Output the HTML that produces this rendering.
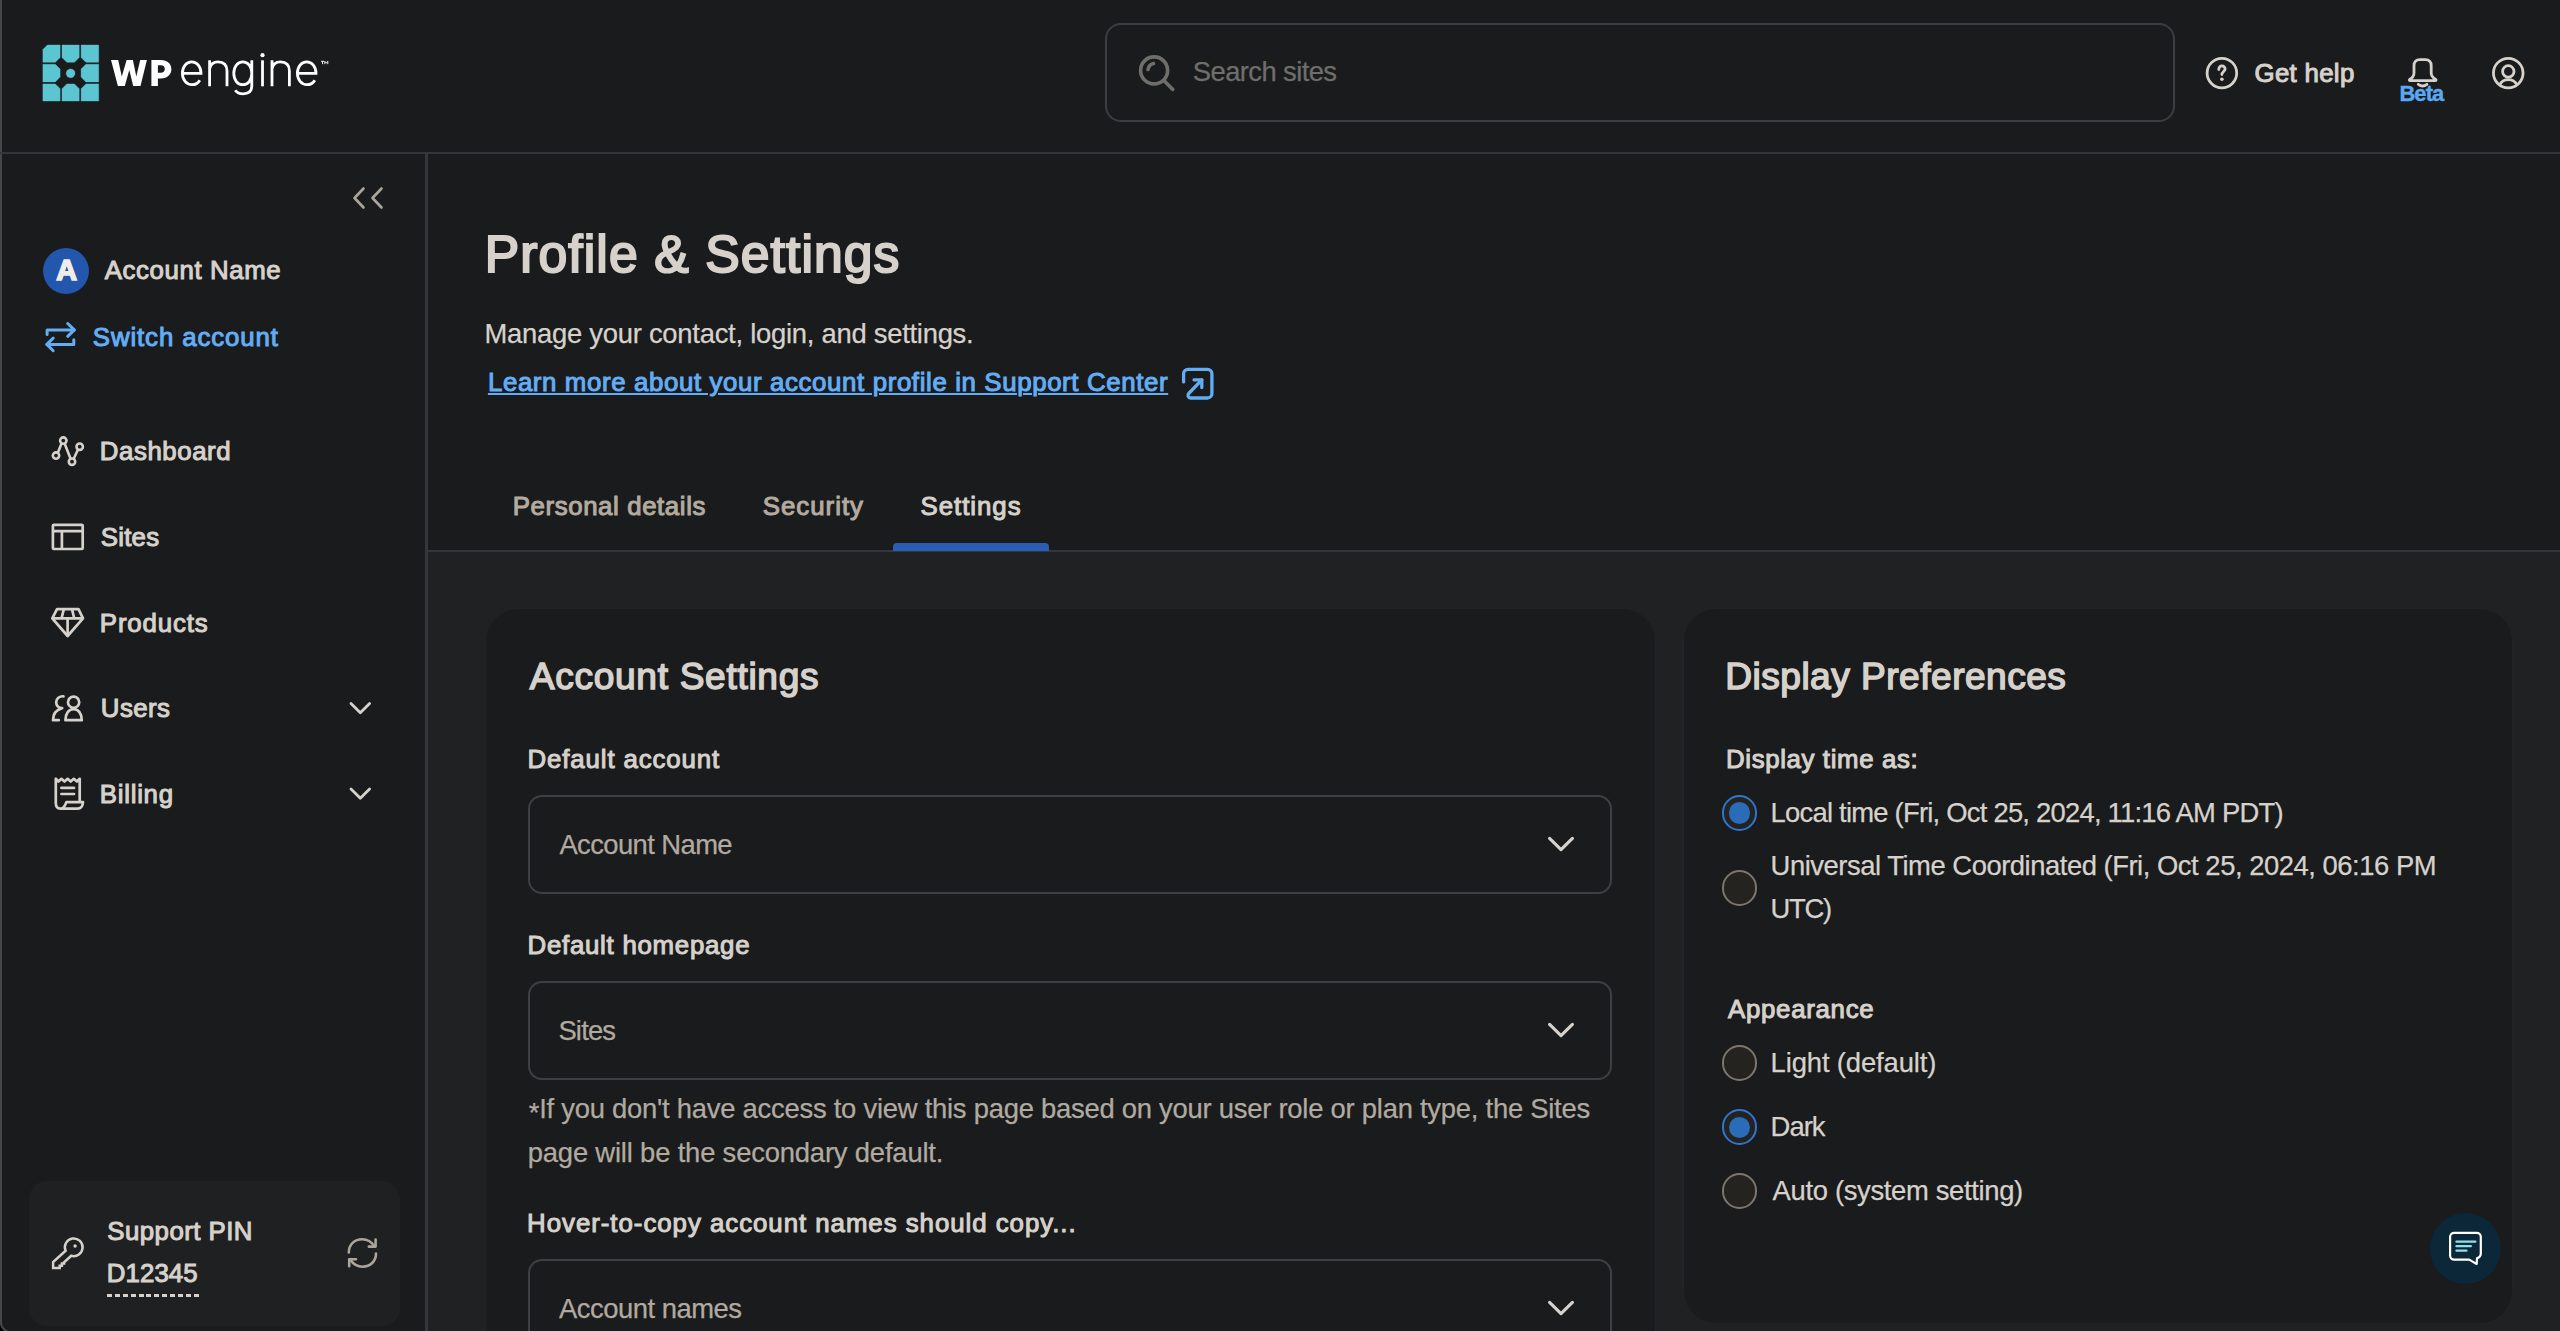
<!DOCTYPE html>
<html><head><meta charset="utf-8"><title>Profile &amp; Settings</title>
<style>
html,body{margin:0;padding:0;background:#1a1b1d}
body{width:2560px;height:1331px;overflow:hidden;position:relative;background:#1a1b1d;font-family:"Liberation Sans",sans-serif}
.a{position:absolute}
.t{position:absolute;white-space:pre;font-family:"Liberation Sans",sans-serif}
svg{position:absolute;overflow:visible}
#t_search{left:1192.82px;top:58.10px;font-size:27.40px;line-height:27.40px;font-weight:400;letter-spacing:-0.588px;color:#6f6e6b;-webkit-text-stroke:0.25px #6f6e6b}
#t_help{left:2254.52px;top:61.34px;font-size:25.82px;line-height:25.82px;font-weight:400;letter-spacing:0.306px;color:#d6d2cb;-webkit-text-stroke:1.03px #d6d2cb}
#t_beta{left:2399.40px;top:82.94px;font-size:21.80px;line-height:21.80px;font-weight:700;letter-spacing:-0.807px;color:#5aa9f2;-webkit-text-stroke:0.40px #5aa9f2}
#t_acct{left:104.72px;top:257.74px;font-size:25.82px;line-height:25.82px;font-weight:400;letter-spacing:0.603px;color:#d6d2cb;-webkit-text-stroke:1.03px #d6d2cb}
#t_switch{left:92.82px;top:325.34px;font-size:25.82px;line-height:25.82px;font-weight:400;letter-spacing:0.887px;color:#63adf4;-webkit-text-stroke:1.03px #63adf4}
#t_dash{left:99.82px;top:439.34px;font-size:25.82px;line-height:25.82px;font-weight:400;letter-spacing:0.568px;color:#d6d2cb;-webkit-text-stroke:1.03px #d6d2cb}
#t_sites{left:100.82px;top:525.34px;font-size:25.82px;line-height:25.82px;font-weight:400;letter-spacing:0.222px;color:#d6d2cb;-webkit-text-stroke:1.03px #d6d2cb}
#t_prod{left:99.82px;top:610.94px;font-size:25.82px;line-height:25.82px;font-weight:400;letter-spacing:0.859px;color:#d6d2cb;-webkit-text-stroke:1.03px #d6d2cb}
#t_users{left:100.82px;top:695.54px;font-size:25.82px;line-height:25.82px;font-weight:400;letter-spacing:0.442px;color:#d6d2cb;-webkit-text-stroke:1.03px #d6d2cb}
#t_bill{left:99.82px;top:782.14px;font-size:25.82px;line-height:25.82px;font-weight:400;letter-spacing:0.726px;color:#d6d2cb;-webkit-text-stroke:1.03px #d6d2cb}
#t_pin{left:107.32px;top:1219.44px;font-size:25.82px;line-height:25.82px;font-weight:400;letter-spacing:0.450px;color:#d6d2cb;-webkit-text-stroke:1.03px #d6d2cb}
#t_pinv{left:106.82px;top:1260.94px;font-size:25.82px;line-height:25.82px;font-weight:400;letter-spacing:0.081px;color:#d6d2cb;-webkit-text-stroke:1.03px #d6d2cb}
#t_title{left:484.73px;top:229.18px;font-size:51.65px;line-height:51.65px;font-weight:400;letter-spacing:1.092px;color:#d6d2cb;-webkit-text-stroke:2.07px #d6d2cb}
#t_sub{left:484.52px;top:319.60px;font-size:27.40px;line-height:27.40px;font-weight:400;letter-spacing:-0.257px;color:#d6d2cb;-webkit-text-stroke:0.25px #d6d2cb}
#t_link{left:487.92px;top:370.04px;font-size:25.82px;line-height:25.82px;font-weight:400;letter-spacing:0.629px;color:#63adf4;-webkit-text-stroke:1.03px #63adf4}
#t_tab1{left:512.72px;top:494.14px;font-size:25.82px;line-height:25.82px;font-weight:400;letter-spacing:0.601px;color:#b3ab9f;-webkit-text-stroke:1.03px #b3ab9f}
#t_tab2{left:762.72px;top:494.14px;font-size:25.82px;line-height:25.82px;font-weight:400;letter-spacing:1.004px;color:#b3ab9f;-webkit-text-stroke:1.03px #b3ab9f}
#t_tab3{left:920.52px;top:494.14px;font-size:25.82px;line-height:25.82px;font-weight:400;letter-spacing:0.972px;color:#d6d2cb;-webkit-text-stroke:1.03px #d6d2cb}
#t_as{left:529.84px;top:657.71px;font-size:37.09px;line-height:37.09px;font-weight:400;letter-spacing:0.694px;color:#d6d2cb;-webkit-text-stroke:1.48px #d6d2cb}
#t_da{left:527.52px;top:747.14px;font-size:25.82px;line-height:25.82px;font-weight:400;letter-spacing:0.877px;color:#d6d2cb;-webkit-text-stroke:1.03px #d6d2cb}
#t_s1{left:559.42px;top:831.10px;font-size:27.40px;line-height:27.40px;font-weight:400;letter-spacing:-0.587px;color:#b1aaa0;-webkit-text-stroke:0.25px #b1aaa0}
#t_dh{left:527.52px;top:932.54px;font-size:25.82px;line-height:25.82px;font-weight:400;letter-spacing:0.738px;color:#d6d2cb;-webkit-text-stroke:1.03px #d6d2cb}
#t_s2{left:558.42px;top:1016.70px;font-size:27.40px;line-height:27.40px;font-weight:400;letter-spacing:-0.811px;color:#b1aaa0;-webkit-text-stroke:0.25px #b1aaa0}
#t_n1{left:528.72px;top:1095.20px;font-size:27.40px;line-height:27.40px;font-weight:400;letter-spacing:-0.242px;color:#b1aaa0;-webkit-text-stroke:0.25px #b1aaa0}
#t_n2{left:527.72px;top:1138.50px;font-size:27.40px;line-height:27.40px;font-weight:400;letter-spacing:-0.180px;color:#b1aaa0;-webkit-text-stroke:0.25px #b1aaa0}
#t_hc{left:527.12px;top:1210.74px;font-size:25.82px;line-height:25.82px;font-weight:400;letter-spacing:0.968px;color:#d6d2cb;-webkit-text-stroke:1.03px #d6d2cb}
#t_s3{left:559.02px;top:1294.70px;font-size:27.40px;line-height:27.40px;font-weight:400;letter-spacing:-0.479px;color:#b1aaa0;-webkit-text-stroke:0.25px #b1aaa0}
#t_dp{left:1725.24px;top:657.81px;font-size:37.09px;line-height:37.09px;font-weight:400;letter-spacing:0.493px;color:#d6d2cb;-webkit-text-stroke:1.48px #d6d2cb}
#t_dt{left:1726.02px;top:746.74px;font-size:25.82px;line-height:25.82px;font-weight:400;letter-spacing:0.631px;color:#d6d2cb;-webkit-text-stroke:1.03px #d6d2cb}
#t_r1{left:1770.62px;top:798.80px;font-size:27.40px;line-height:27.40px;font-weight:400;letter-spacing:-0.768px;color:#d6d2cb;-webkit-text-stroke:0.25px #d6d2cb}
#t_r2{left:1770.62px;top:852.30px;font-size:27.40px;line-height:27.40px;font-weight:400;letter-spacing:-0.468px;color:#d6d2cb;-webkit-text-stroke:0.25px #d6d2cb}
#t_r2b{left:1770.62px;top:894.50px;font-size:27.40px;line-height:27.40px;font-weight:400;letter-spacing:-1.280px;color:#d6d2cb;-webkit-text-stroke:0.25px #d6d2cb}
#t_ap{left:1728.02px;top:997.14px;font-size:25.82px;line-height:25.82px;font-weight:400;letter-spacing:0.713px;color:#d6d2cb;-webkit-text-stroke:1.03px #d6d2cb}
#t_l{left:1770.62px;top:1048.60px;font-size:27.40px;line-height:27.40px;font-weight:400;letter-spacing:-0.129px;color:#d6d2cb;-webkit-text-stroke:0.25px #d6d2cb}
#t_d{left:1770.62px;top:1112.60px;font-size:27.40px;line-height:27.40px;font-weight:400;letter-spacing:-0.961px;color:#d6d2cb;-webkit-text-stroke:0.25px #d6d2cb}
#t_a{left:1772.62px;top:1177.00px;font-size:27.40px;line-height:27.40px;font-weight:400;letter-spacing:-0.334px;color:#d6d2cb;-webkit-text-stroke:0.25px #d6d2cb}
#t_avA{left:56.20px;top:255.54px;font-size:28.78px;line-height:28.78px;font-weight:700;letter-spacing:0.000px;color:#f0ede8;-webkit-text-stroke:1.60px #f0ede8}
#t_link{text-decoration:underline;text-decoration-thickness:2px;text-underline-offset:2px;text-decoration-skip-ink:auto}
</style></head>
<body>
<!-- frame / backgrounds -->
<div class="a" style="left:0;top:0;width:2px;height:1331px;background:#454748"></div>
<div class="a" style="left:0;top:152px;width:2560px;height:2px;background:#333639"></div>
<div class="a" style="left:425px;top:154px;width:3px;height:1177px;background:#34373a"></div>
<div class="a" style="left:428px;top:550px;width:2132px;height:2px;background:#34373a"></div>
<div class="a" style="left:428px;top:552px;width:2132px;height:779px;background:#202123"></div>

<svg style="left:0;top:1311px" width="24" height="20" viewBox="0 0 24 20">
  <path d="M0 11A11.25 11.25 0 0 0 11.25 22.25H0Z" fill="#000"/>
  <path d="M1 11A10.25 10.25 0 0 0 11.25 21.25" fill="none" stroke="#454748" stroke-width="2"/>
</svg>
<!-- header -->
<svg style="left:42px;top:45px" width="57" height="57" viewBox="0 0 57 57">
  <g fill="#5bc6d2" stroke="#5bc6d2" stroke-width="0.4" stroke-linejoin="round">
    <path d="M0.9 4.5L5.4 0H18.1V12.5L13.3 17.3H0.9Z"/>
    <path d="M20 0H37.2V12.5L32.4 17.3H24.8L20 12.5Z"/>
    <path d="M39.1 0H56.7V17.3H43.9L39.1 12.5Z"/>
    <path d="M0.9 19.3H13.3L18.1 24.1V32.1L13.3 36.9H0.9Z"/>
    <path d="M43.9 19.3H56.7V36.9H43.9L39.1 32.1V24.1Z"/>
    <path d="M0.9 38.9H13.3L18.1 43.7V56H0.9Z"/>
    <path d="M24.8 38.9H32.4L37.2 43.7V56H20V43.7Z"/>
    <path d="M43.9 38.9H56.7V56H39.1V43.7Z"/>
    <circle cx="28.6" cy="28.3" r="4.4"/>
  </g>
</svg>
<svg style="left:105px;top:52px" width="75" height="40" viewBox="0 0 75 40">
  <path fill="#fff" d="M6 8.1H13.2L16.8 24.6L21.6 8.1H27.9L31.3 24.6L35.2 8.1H41.9L35.5 34H28.2L24.3 18L19.8 34H12.9Z"/>
  <path fill="#fff" fill-rule="evenodd" d="M46.4 8.1H56C62 8.1 66.4 11.8 66.4 17.3C66.4 22.8 62 26.4 56 26.4H52.9V34H46.4ZM52.9 13.2H55.8C58.3 13.2 59.8 14.8 59.8 17C59.8 19.2 58.3 20.7 55.8 20.7H52.9Z"/>
</svg>
<svg style="left:180px;top:50px" width="160" height="50" viewBox="0 0 160 50">
  <g fill="none" stroke="#fff" stroke-width="2.8">
    <path id="eL" d="M2.4 23.3H21C21 16.5 17 11.9 11.7 11.9C6.4 11.9 2.4 16.8 2.4 23.3C2.4 29.8 6.4 34.7 11.9 34.7C15.5 34.7 18.2 33 19.8 30.2"/>
    <path d="M29.6 10.3V36.3M29.6 19C30.5 14.5 33.5 11.9 38 11.9C43.5 11.9 47 15 47 21V36.3"/>
    <path d="M71.8 10.3V36C71.8 41 68.5 43.8 63 43.8C59.5 43.8 56.8 42.5 55.2 40.2M71.8 23.3C71.8 16.5 68 11.9 62.8 11.9C57.6 11.9 53.8 16.5 53.8 23.3C53.8 30 57.6 34.7 62.8 34.7C68 34.7 71.8 30 71.8 23.3Z"/>
    <path d="M82.5 10.3V36.3"/>
    <path d="M92 10.3V36.3M92 19C92.9 14.5 95.9 11.9 100.4 11.9C105.9 11.9 109.4 15 109.4 21V36.3"/>
    <path d="M117.4 23.3H136C136 16.5 132 11.9 126.7 11.9C121.4 11.9 117.4 16.8 117.4 23.3C117.4 29.8 121.4 34.7 126.9 34.7C130.5 34.7 133.2 33 134.8 30.2"/>
  </g>
  <circle cx="82.5" cy="5.2" r="2.1" fill="#fff"/>
  <path d="M141 11.3H144M142.5 11.3V14.2M144.8 14.2V11.3L146.3 13.2L147.8 11.3V14.2" fill="none" stroke="#fff" stroke-width="0.9"/>
</svg>

<!-- search -->
<div class="a" style="left:1105px;top:23px;width:1066px;height:95px;border:2px solid #3b3d40;border-radius:16px"></div>
<svg style="left:1125px;top:45px" width="60" height="60" viewBox="0 0 60 60">
  <g fill="none" stroke="#6f6e6b" stroke-width="3.6" stroke-linecap="round">
    <circle cx="29.1" cy="25.4" r="13.5"/>
    <path d="M39.2 35.8L47.8 44.4"/>
    <path d="M23 24.5C23.6 21.2 25.5 19.3 28.5 18.6"/>
  </g>
</svg>

<!-- help / bell / user -->
<svg style="left:2200px;top:50px" width="50" height="50" viewBox="0 0 50 50">
  <g fill="none" stroke="#d6d2cb" stroke-width="2.8" stroke-linecap="round">
    <circle cx="21.9" cy="23.1" r="14.8"/>
    <path d="M18.8 19.5C18.8 17.4 20.2 15.9 21.9 15.9C23.7 15.9 25.1 17.3 25.1 19C25.1 21.3 21.9 21.7 21.9 24.5"/>
  </g>
  <circle cx="21.9" cy="29.3" r="1.8" fill="#d6d2cb"/>
</svg>
<svg style="left:2400px;top:50px" width="50" height="50" viewBox="0 0 50 50">
  <g fill="none" stroke="#d6d2cb" stroke-width="2.8" stroke-linecap="round" stroke-linejoin="round">
    <path d="M14 23C14 26.5 12 28 10 29.2C9 29.8 9.2 30.6 10.4 30.6H35C36.2 30.6 36.4 29.8 35.4 29.2C33.4 28 31.2 26.5 31.2 23V15.5C31.2 12 29 9.6 25.5 9.6H19.7C16.2 9.6 14 12 14 15.5Z"/>
    <path d="M18.3 34.3Q22.6 37.6 26.9 34.3"/>
  </g>
</svg>
<svg style="left:2490px;top:50px" width="50" height="50" viewBox="0 0 50 50">
  <g fill="none" stroke="#d6d2cb" stroke-width="2.8">
    <circle cx="18.25" cy="23.1" r="14.8"/>
    <circle cx="18.3" cy="21.4" r="5.7"/>
    <path d="M9.6 34.8C11.4 31.5 14.6 29.6 18.3 29.6C22 29.6 25.2 31.5 27 34.8"/>
  </g>
</svg>

<!-- sidebar -->
<svg style="left:345px;top:180px" width="50" height="40" viewBox="0 0 50 40">
  <g fill="none" stroke="#aca599" stroke-width="2.6" stroke-linecap="round" stroke-linejoin="round">
    <path d="M18.5 8.5L9.5 18L18.5 27.5"/>
    <path d="M36.5 8.5L27.5 18L36.5 27.5"/>
  </g>
</svg>
<div class="a" style="left:42.8px;top:248px;width:46.4px;height:46.4px;border-radius:50%;background:#2356ad"></div>
<svg style="left:40px;top:315px" width="45" height="45" viewBox="0 0 45 45">
  <g fill="none" stroke="#63adf4" stroke-width="3" stroke-linecap="round" stroke-linejoin="round">
    <path d="M7.1 19.6V14.9H34.2"/>
    <path d="M27.7 8.5L34.3 14.9L27.7 21.3"/>
    <path d="M33.8 24.7V29.4H7"/>
    <path d="M13.2 23.1L6.8 29.4L13.2 35.7"/>
  </g>
</svg>
<!-- nav icons -->
<svg style="left:45px;top:425px" width="45" height="45" viewBox="0 0 45 45">
  <g fill="none" stroke="#d6d2cb" stroke-width="2.6">
    <circle cx="18.3" cy="15.6" r="3.2"/>
    <circle cx="34.7" cy="21.7" r="3.2"/>
    <circle cx="11" cy="30.6" r="3.2"/>
    <circle cx="27" cy="36.7" r="3.2"/>
    <path d="M12.8 28L16.6 18.3M19.6 18.6L25.6 33.8M28.6 34L33 24.5"/>
  </g>
</svg>
<svg style="left:45px;top:515px" width="45" height="45" viewBox="0 0 45 45">
  <g fill="none" stroke="#d6d2cb" stroke-width="2.7">
    <rect x="7.9" y="9.8" width="29.8" height="24.2" rx="1"/>
    <path d="M7.9 16.2H37.7M16.9 16.2V34"/>
  </g>
</svg>
<svg style="left:45px;top:600px" width="45" height="45" viewBox="0 0 45 45">
  <g fill="none" stroke="#d6d2cb" stroke-width="2.7" stroke-linejoin="round">
    <path d="M12 9.1H33.5L38 18.3L22.6 36L7.3 18.3Z"/>
    <path d="M7.5 18.3H37.8M22.6 18.3V35.5M18.8 9.3L16.5 18.3M27 9.3L29.2 18.3"/>
  </g>
</svg>
<svg style="left:45px;top:686px" width="45" height="45" viewBox="0 0 45 45">
  <g fill="none" stroke="#d6d2cb" stroke-width="2.7" stroke-linecap="round" stroke-linejoin="round">
    <circle cx="28.6" cy="16.2" r="5.6"/>
    <path d="M20.4 34.2C20.4 27.5 23.9 23.2 28.6 23.2C33.3 23.2 36.8 27.5 36.8 34.2Z"/>
    <path d="M18.5 10.3C14.5 10 11.2 12.5 11.2 16.2C11.2 19.6 13.8 21.8 17.2 22.2C11.5 23.6 8 28 8 34.2H13.8"/>
  </g>
</svg>
<svg style="left:45px;top:771px" width="45" height="45" viewBox="0 0 45 45">
  <g fill="none" stroke="#d6d2cb" stroke-width="2.7" stroke-linecap="round" stroke-linejoin="round">
    <path d="M34.7 30.4V7.8L31.9 10.5L28.8 7.8L25.7 10.5L22.6 7.8L19.5 10.5L16.4 7.8L13.5 10.5L10.8 7.8V32C10.8 35.5 12.5 37.6 15.4 37.6H32.8C35.6 37.6 38 35 38 31.1H21.4C20.2 34.5 18.5 37.6 15.4 37.6"/>
    <path d="M16.4 16.9H29M16.4 23H29"/>
  </g>
</svg>
<!-- chevrons -->
<svg style="left:340px;top:691px" width="40" height="40" viewBox="0 0 40 40">
  <path d="M11 12.5L20.3 21.7L29.6 12.5" fill="none" stroke="#d6d2cb" stroke-width="2.8" stroke-linecap="round" stroke-linejoin="round"/>
</svg>
<svg style="left:340px;top:776px" width="40" height="40" viewBox="0 0 40 40">
  <path d="M11 13L20.3 22.2L29.6 13" fill="none" stroke="#d6d2cb" stroke-width="2.8" stroke-linecap="round" stroke-linejoin="round"/>
</svg>

<!-- support pin -->
<div class="a" style="left:29px;top:1181px;width:370.7px;height:144.5px;border-radius:18px;background:#1f2022"></div>
<svg style="left:45px;top:1230px" width="45" height="45" viewBox="0 0 45 45">
  <path d="M20.6 20.7L8.1 32V38H14.7V35.8H16.9V33.6H19.1V32.4L26.25 25.74A8.85 8.85 0 1 0 20.6 20.7Z" fill="none" stroke="#d6d2cb" stroke-width="2.5" stroke-linejoin="miter"/>
  <circle cx="30.1" cy="16" r="1.7" fill="#d6d2cb"/>
</svg>
<div class="a" style="left:107px;top:1294.3px;width:92.4px;height:2.6px;background:repeating-linear-gradient(90deg,#d6d2cb 0 4.9px,transparent 4.9px 7.9px)"></div>
<svg style="left:340px;top:1230px" width="45" height="45" viewBox="0 0 45 45">
  <g fill="none" stroke="#aca599" stroke-width="2.6" stroke-linecap="round" stroke-linejoin="round">
    <path d="M8.8 22.5C8.8 14.5 14.5 9.2 22.2 9.2C28 9.2 32.2 12.8 34.4 16.2"/>
    <path d="M35.6 9.6V16.6H28.8"/>
    <path d="M36 23.5C36 31.3 30.3 36.7 22.6 36.7C16.8 36.7 12.6 33.2 10.4 29.8"/>
    <path d="M9.2 36.3V29.2H16"/>
  </g>
</svg>

<!-- main -->
<svg style="left:1170px;top:355px" width="60" height="55" viewBox="0 0 60 55">
  <g fill="none" stroke="#63adf4" stroke-width="3.3" stroke-linecap="round" stroke-linejoin="round">
    <path d="M13.6 26.9V18.8C13.6 16.3 15.6 14.3 18.1 14.3H37.4C39.9 14.3 41.9 16.3 41.9 18.8V38.5C41.9 41 39.9 43 37.4 43H20.6C18.2 43 17 40.2 18.7 38.5L31.8 24.8"/>
    <path d="M24 24.8H31.8V32.6"/>
  </g>
</svg>
<div class="a" style="left:893px;top:543px;width:156px;height:8px;border-radius:4px 4px 0 0;background:#2a5db1"></div>

<!-- card 1 -->
<div class="a" style="left:485.8px;top:609px;width:1169.4px;height:760px;border-radius:32px;background:#1a1b1d;box-shadow:0 0 0 1px #212326"></div>
<div class="a" style="left:528px;top:795px;width:1080px;height:95px;border:2px solid #3d3f42;border-radius:14px"></div>
<div class="a" style="left:528px;top:980.7px;width:1080px;height:95px;border:2px solid #3d3f42;border-radius:14px"></div>
<div class="a" style="left:528px;top:1259px;width:1080px;height:95px;border:2px solid #3d3f42;border-radius:14px"></div>
<svg style="left:1540px;top:825px" width="40" height="40" viewBox="0 0 40 40">
  <path d="M9.6 13.4L21 24.6L32.4 13.4" fill="none" stroke="#d6d2cb" stroke-width="3.2" stroke-linecap="round" stroke-linejoin="round"/>
</svg>
<svg style="left:1540px;top:1010.6px" width="40" height="40" viewBox="0 0 40 40">
  <path d="M9.6 13.4L21 24.6L32.4 13.4" fill="none" stroke="#d6d2cb" stroke-width="3.2" stroke-linecap="round" stroke-linejoin="round"/>
</svg>
<svg style="left:1540px;top:1289px" width="40" height="40" viewBox="0 0 40 40">
  <path d="M9.6 13.4L21 24.6L32.4 13.4" fill="none" stroke="#d6d2cb" stroke-width="3.2" stroke-linecap="round" stroke-linejoin="round"/>
</svg>

<!-- card 2 -->
<div class="a" style="left:1684px;top:609px;width:827.6px;height:713.5px;border-radius:32px;background:#1a1b1d;box-shadow:0 0 0 1px #212326"></div>
<!-- radios -->
<div class="a" style="left:1721.5px;top:795px;width:31.6px;height:31.6px;border:2px solid #2f74d0;border-radius:50%;background:#25231f"></div>
<div class="a" style="left:1728.7px;top:802.2px;width:21.6px;height:21.6px;border-radius:50%;background:#2b6cb8"></div>
<div class="a" style="left:1721.5px;top:870px;width:31.6px;height:31.6px;border:2px solid #7d766b;border-radius:50%;background:#25231f"></div>
<div class="a" style="left:1721.5px;top:1045px;width:31.6px;height:31.6px;border:2px solid #7d766b;border-radius:50%;background:#25231f"></div>
<div class="a" style="left:1721.5px;top:1109.4px;width:31.6px;height:31.6px;border:2px solid #2f74d0;border-radius:50%;background:#25231f"></div>
<div class="a" style="left:1728.7px;top:1116.6px;width:21.6px;height:21.6px;border-radius:50%;background:#2b6cb8"></div>
<div class="a" style="left:1721.5px;top:1173.4px;width:31.6px;height:31.6px;border:2px solid #7d766b;border-radius:50%;background:#25231f"></div>

<!-- chat -->
<div class="a" style="left:2430px;top:1212.5px;width:71px;height:71px;border-radius:50%;background:#0c2738"></div>
<svg style="left:2440px;top:1222px" width="50" height="50" viewBox="0 0 50 50">
  <path d="M14.1 10.8H36.8C39 10.8 40.8 12.6 40.8 14.8V31.5C40.8 34 39.3 35.5 37 36.3L36.7 42L29.2 37.6H14.1C11.9 37.6 10.1 35.8 10.1 33.6V14.8C10.1 12.6 11.9 10.8 14.1 10.8Z" fill="none" stroke="#fff" stroke-width="2.2" stroke-linejoin="round"/>
  <path d="M16.4 19.7H35.4M16.4 24.2H30.9M16.4 28.7H26.5" fill="none" stroke="#8fdfe5" stroke-width="2.2" stroke-linecap="round"/>
</svg>

<div class="t" id="t_search">Search sites</div>
<div class="t" id="t_help">Get help</div>
<div class="t" id="t_beta">Beta</div>
<div class="t" id="t_acct">Account Name</div>
<div class="t" id="t_switch">Switch account</div>
<div class="t" id="t_dash">Dashboard</div>
<div class="t" id="t_sites">Sites</div>
<div class="t" id="t_prod">Products</div>
<div class="t" id="t_users">Users</div>
<div class="t" id="t_bill">Billing</div>
<div class="t" id="t_pin">Support PIN</div>
<div class="t" id="t_pinv">D12345</div>
<div class="t" id="t_title">Profile &amp; Settings</div>
<div class="t" id="t_sub">Manage your contact, login, and settings.</div>
<div class="t" id="t_link">Learn more about your account profile in Support Center</div>
<div class="t" id="t_tab1">Personal details</div>
<div class="t" id="t_tab2">Security</div>
<div class="t" id="t_tab3">Settings</div>
<div class="t" id="t_as">Account Settings</div>
<div class="t" id="t_da">Default account</div>
<div class="t" id="t_s1">Account Name</div>
<div class="t" id="t_dh">Default homepage</div>
<div class="t" id="t_s2">Sites</div>
<div class="t" id="t_n1"><span style="position:relative;top:4px">*</span>If you don&#x27;t have access to view this page based on your user role or plan type, the Sites</div>
<div class="t" id="t_n2">page will be the secondary default.</div>
<div class="t" id="t_hc">Hover-to-copy account names should copy...</div>
<div class="t" id="t_s3">Account names</div>
<div class="t" id="t_dp">Display Preferences</div>
<div class="t" id="t_dt">Display time as:</div>
<div class="t" id="t_r1">Local time (Fri, Oct 25, 2024, 11:16 AM PDT)</div>
<div class="t" id="t_r2">Universal Time Coordinated (Fri, Oct 25, 2024, 06:16 PM</div>
<div class="t" id="t_r2b">UTC)</div>
<div class="t" id="t_ap">Appearance</div>
<div class="t" id="t_l">Light (default)</div>
<div class="t" id="t_d">Dark</div>
<div class="t" id="t_a">Auto (system setting)</div>
<div class="t" id="t_avA">A</div>
</body></html>
